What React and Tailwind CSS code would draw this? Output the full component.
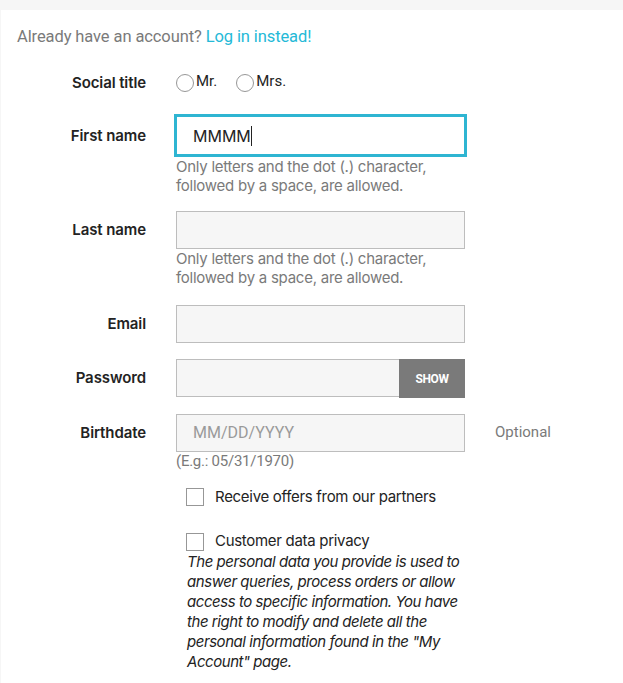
import React from 'react';

const Label = ({ children }) => (
    <div className="w-[145px] shrink-0 text-right text-[15px] font-semibold text-[#232323] font-['Inter',sans-serif] tracking-[-0.1px]">
        {children}
    </div>
);

const Help = ({ children, className = '' }) => (
    <p className={`text-[15px] leading-[19px] text-[#7a7a7a] font-['Inter',sans-serif] tracking-[-0.25px] ${className}`}>
        {children}
    </p>
);

const Radio = ({ label }) => (
    <label className="flex items-center gap-[2px]">
        <span className="w-[18px] h-[18px] rounded-full border border-[#979797] bg-white" />
        <span className="text-[15px] text-[#232323] -mt-[4px] font-['Roboto',sans-serif]">{label}</span>
    </label>
);

const Box = ({ className = '', children }) => (
    <div className={`h-[38px] border border-[#bdbdbd] bg-[#f6f6f6] flex items-center pl-4 ${className}`}>
        {children}
    </div>
);

export default function App() {
    return (
        <div className="min-h-[683px] bg-[#f6f6f6] pt-[10px] pl-[1px]">
            <div className="bg-white min-h-[673px] pt-[15px] pb-6">
                <p className="pl-4 text-[16.5px] leading-6 text-[#7a7a7a] font-['Roboto',sans-serif] tracking-[-0.1px]">
                    Already have an account? <a className="text-[#24b9d7]">Log in instead!</a>
                </p>

                {/* social title */}
                <div className="flex items-center mt-[25px] h-[18px]">
                    <Label>Social title</Label>
                    <div className="ml-[30px] flex gap-[19px]">
                        <Radio label="Mr." />
                        <Radio label="Mrs." />
                    </div>
                </div>

                {/* first name */}
                <div className="flex items-center mt-[22px]">
                    <div className="pt-[2px]"><Label>First name</Label></div>
                    <div className="ml-[28px] w-[293px] h-[43px] border-[3px] border-[#2fb5d2] bg-white flex items-center pl-[16px]">
                        <span className="text-[16px] text-[#232323] font-['Inter',sans-serif]">MMMM</span>
                        <span className="w-px h-[20px] bg-[#232323]" />
                    </div>
                </div>
                <Help className="ml-[175px] mt-0">
                    Only letters and the dot (.) character,<br />followed by a space, are allowed.
                </Help>

                {/* last name */}
                <div className="flex items-center mt-4">
                    <Label>Last name</Label>
                    <Box className="ml-[30px] w-[289px]" />
                </div>
                <Help className="ml-[175px] mt-0">
                    Only letters and the dot (.) character,<br />followed by a space, are allowed.
                </Help>

                {/* email */}
                <div className="flex items-center mt-[18px]">
                    <Label>Email</Label>
                    <Box className="ml-[30px] w-[289px]" />
                </div>

                {/* password */}
                <div className="flex items-center mt-4">
                    <Label>Password</Label>
                    <div className="ml-[30px] w-[289px] flex">
                        <Box className="flex-1 border-r-0" />
                        <button className="w-[66px] h-[39px] bg-[#7a7a7a] text-white text-[12px] font-bold font-['Roboto',sans-serif] tracking-[-0.4px]">
                            SHOW
                        </button>
                    </div>
                </div>

                {/* birthdate */}
                <div className="flex items-center mt-[16px]">
                    <Label>Birthdate</Label>
                    <Box className="ml-[30px] w-[289px]">
                        <span className="text-[16px] text-[#9a9a9a] font-['Roboto',sans-serif]">MM/DD/YYYY</span>
                    </Box>
                    <span className="ml-[30px] -mt-[1px] text-[15px] text-[#7a7a7a] font-['Roboto',sans-serif]">Optional</span>
                </div>
                <Help className="ml-[175px] mt-0 font-['Roboto',sans-serif]">(E.g.: 05/31/1970)</Help>

                {/* checkboxes */}
                <div className="ml-[185px] mt-[15px] flex items-center gap-[11px]">
                    <span className="w-[18px] h-[18px] border border-[#979797] bg-white" />
                    <span className="text-[15px] text-[#232323] font-['Inter',sans-serif] tracking-[-0.3px]">Receive offers from our partners</span>
                </div>

                <div className="ml-[185px] mt-[24px] flex items-center gap-[11px]">
                    <span className="w-[18px] h-[18px] border border-[#979797] bg-white" />
                    <span className="text-[15px] text-[#232323] -mt-[3px] font-['Inter',sans-serif] tracking-[-0.3px]">Customer data privacy</span>
                </div>
                <p className="ml-[186px] mt-0 w-[280px] italic text-[15px] leading-[20px] text-[#232323] font-['Inter',sans-serif] tracking-[-0.45px]">
                    The personal data you provide is used to answer queries, process orders or allow access to specific information. You have the right to modify and delete all the personal information found in the "My Account" page.
                </p>
            </div>
        </div>
    );
}
